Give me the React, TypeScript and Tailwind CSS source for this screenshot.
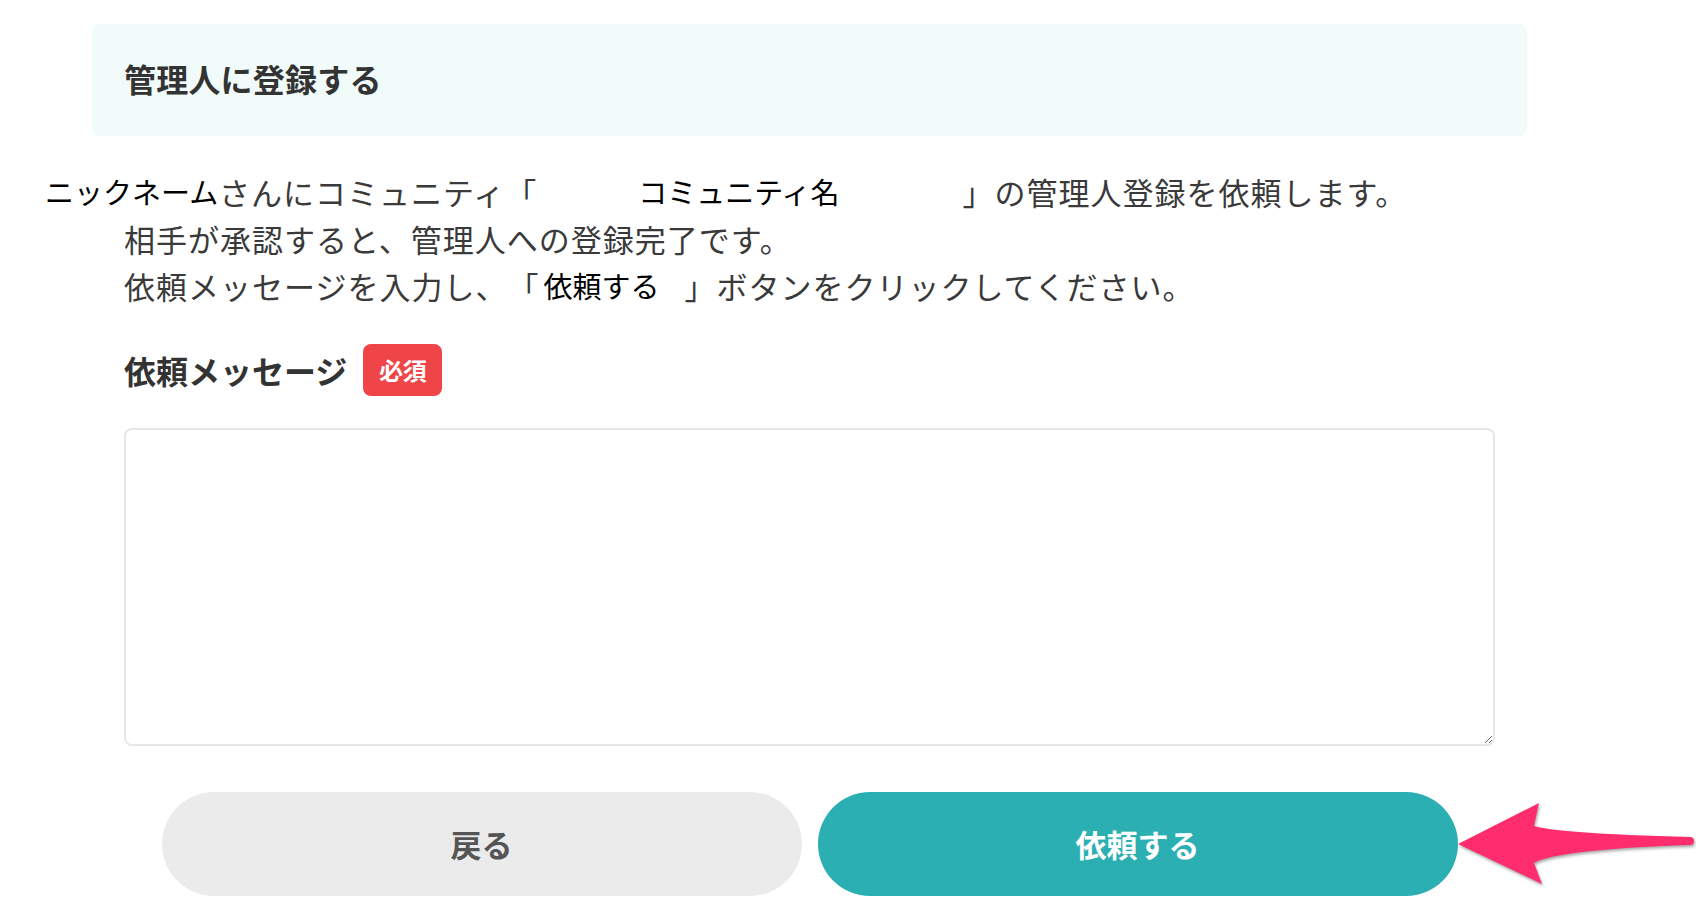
import React from "react"

const font = { fontFamily: '"Noto Sans CJK JP", "Noto Sans", sans-serif' }

function PointerArrow() {
  // pink annotation arrow pointing at the submit button
  return (
    <svg
      className="absolute left-[1450px] top-[790px] drop-shadow-[1px_2px_1.5px_rgba(0,0,0,0.35)]"
      width="246"
      height="110"
      viewBox="0 0 246 110"
    >
      <path
        d="M8 54 L89 13 L84 36 C95 40 150 45 240 47 A4 4 0 0 1 240 55 C150 58 100 64 84 73 L92 94 Z"
        fill="#ff2d6e"
      />
    </svg>
  )
}

export default function App() {
  return (
    <div
      className="relative min-h-[920px] w-full bg-white text-[#3a3a3a] [text-spacing-trim:space-all]"
      style={font}
    >
      <div className="ml-[92px] w-[1435px] pt-6">
        {/* Title */}
        <div className="flex h-[112px] items-center rounded-lg bg-[#f1fbfa] px-8 pb-1">
          <h2 className="text-[32px] font-bold leading-none tracking-[0.2px] text-[#333]">
            管理人に登録する
          </h2>
        </div>

        <div className="px-8">
          {/* Description */}
          <div className="mt-8 whitespace-nowrap text-[31px] leading-[47px] tracking-[1px]">
            <div>
              <span className="-ml-[79px] inline-block w-[174px] align-top text-[29px] tracking-normal text-black">
                ニックネーム
              </span>
              さんにコミュニティ「
              <span className="inline-block pl-[101px] pr-[123px] align-top text-[29px] tracking-normal text-black">
                コミュニティ名
              </span>
              」の管理人登録を依頼します。
            </div>
            <div>相手が承認すると、管理人への登録完了です。</div>
            <div>
              依頼メッセージを入力し、「
              <span className="inline-block pl-[4px] pr-[25px] align-top text-[29px] tracking-normal text-black">
                依頼する
              </span>
              」ボタンをクリックしてください。
            </div>
          </div>

          {/* Label */}
          <div className="mt-[35px] flex h-[52px] items-center gap-4">
            <label className="text-[32px] font-bold leading-none text-[#333]">依頼メッセージ</label>
            <span className="flex h-[52px] w-[79px] items-center justify-center rounded-lg bg-[#ef4548] text-[24px] font-bold text-white">
              必須
            </span>
          </div>

          {/* Message */}
          <textarea className="mt-8 block h-[318px] w-full rounded-lg border-2 border-[#e6e6ea] bg-white p-4 text-[28px] outline-none" />

          {/* Actions */}
          <div className="mt-[46px] flex justify-center gap-4">
            <button className="h-[104px] w-[640px] rounded-full bg-[#ebebeb] text-[31px] font-bold text-[#555]">
              戻る
            </button>
            <button className="h-[104px] w-[640px] rounded-full bg-[#2cafb3] text-[31px] font-bold text-white">
              依頼する
            </button>
          </div>
        </div>
      </div>

      <PointerArrow />
    </div>
  )
}
